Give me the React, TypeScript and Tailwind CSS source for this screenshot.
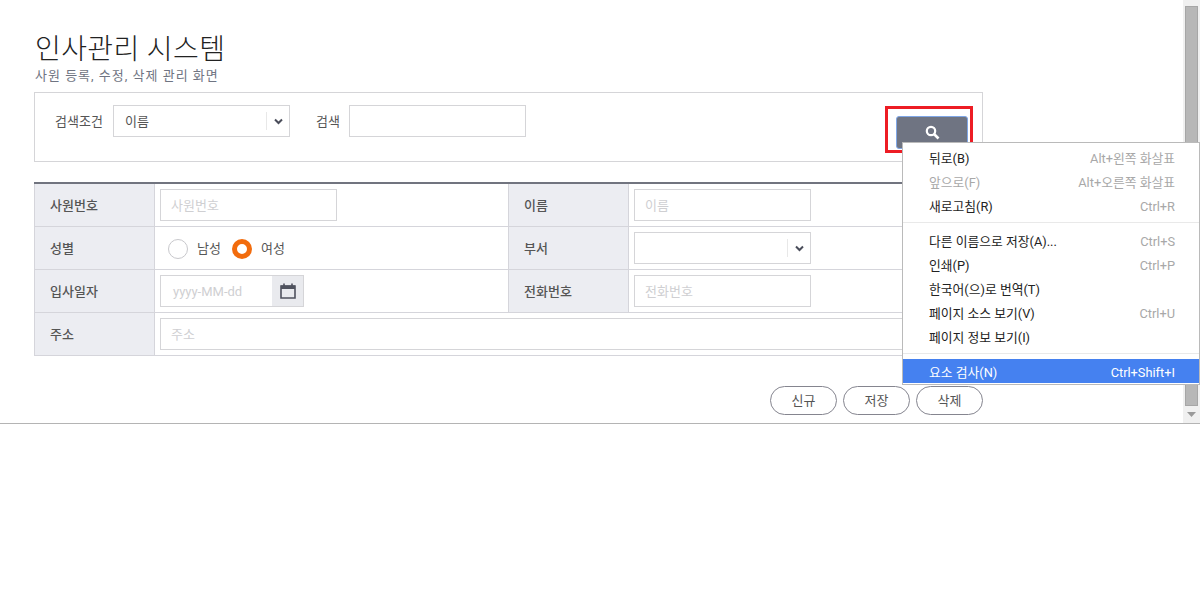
const font = { fontFamily: 'Roboto, "Noto Sans CJK KR", sans-serif' };

function Chevron() {
  return (
    <svg width="9" height="7" viewBox="0 0 9 7" className="text-[#4a4d5a]">
      <path d="M1 1.5l3.5 3.5L8 1.5" fill="none" stroke="currentColor" strokeWidth="2" />
    </svg>
  );
}

function Select({ value }: { value?: string }) {
  return (
    <div className="w-[177px] h-[32px] bg-white border border-[#d5d5d8] flex items-center pl-[11px] text-[13px] text-[#555]">
      <span className="flex-1 pt-[2px]">{value}</span>
      <div className="w-[23px] h-[18px] border-l border-[#e8e8e8] flex items-center justify-center">
        <Chevron />
      </div>
    </div>
  );
}

function Field({ placeholder }: { placeholder: string }) {
  return (
    <div className="w-[177px] h-[32px] border border-[#d5d5d8] flex items-center pl-[10px] pt-[2px] text-[13px] text-[#cfcfd2]">
      {placeholder}
    </div>
  );
}

function Th({ children, width }: { children: string; width: string }) {
  return (
    <div className={`${width} shrink-0 bg-[#ecedf2] border-x border-[#d5d5db] pl-[15px] pt-[2px] flex items-center text-[13px] font-medium text-[#555]`}>
      {children}
    </div>
  );
}

function Row({ children }: { children: React.ReactNode }) {
  return <div className="flex h-[43px] border-b border-[#d5d5db]">{children}</div>;
}

function Pill({ label }: { label: string }) {
  return (
    <button className="w-[67px] h-[29px] rounded-full border border-[#85858f] text-[13px] text-[#555] bg-white">
      {label}
    </button>
  );
}

type Item = { label: string; keys?: string; disabled?: boolean };

function MenuRow({ label, keys, disabled }: Item) {
  return (
    <div className="h-[24px] flex items-center justify-between pl-[26px] pr-[24px]">
      <span className={disabled ? "text-[#a8a8a8]" : "text-[#222]"}>{label}</span>
      <span className="text-[#a8a8a8]">{keys}</span>
    </div>
  );
}

const firstGroup: Item[] = [
  { label: "뒤로(B)", keys: "Alt+왼쪽 화살표" },
  { label: "앞으로(F)", keys: "Alt+오른쪽 화살표", disabled: true },
  { label: "새로고침(R)", keys: "Ctrl+R" },
];

const secondGroup: Item[] = [
  { label: "다른 이름으로 저장(A)...", keys: "Ctrl+S" },
  { label: "인쇄(P)", keys: "Ctrl+P" },
  { label: "한국어(으)로 번역(T)" },
  { label: "페이지 소스 보기(V)", keys: "Ctrl+U" },
  { label: "페이지 정보 보기(I)" },
];

export default function App() {
  return (
    <div className="relative w-[1200px] h-[605px] bg-white overflow-hidden" style={font}>
      <div className="flex h-[424px] border-b border-[#b4b4b4]">
        <main className="flex-1 pl-[34px] pt-[34px]">
          <div className="w-[949px]">
            <h1 className="text-[28px] leading-[32px] font-light text-[#222] tracking-[0.4px] pl-px">인사관리 시스템</h1>
            <p className="text-[13px] leading-[18px] text-[#6f7482] mt-px tracking-[1px] pl-px">사원 등록, 수정, 삭제 관리 화면</p>

            <div className="mt-[7px] h-[70px] border border-[#d5d5d8] flex items-start pt-[12px] pl-[20px] pr-[14px] text-[13px] text-[#555]">
              <span className="w-[58px] leading-[33px]">검색조건</span>
              <Select value="이름" />
              <span className="w-[59px] pl-[26px] leading-[33px]">검색</span>
              <div className="w-[177px] h-[32px] border border-[#d5d5d8]" />
              <button className="ml-auto mt-[11px] w-[72px] h-[33px] rounded-[3px] bg-[#6f7482] border border-[#7fa6e6] flex items-center justify-center">
                <svg width="15" height="15" viewBox="0 0 15 15">
                  <circle cx="6" cy="6" r="4.2" fill="none" stroke="white" strokeWidth="2.2" />
                  <path d="M9 9l4.5 4.5" stroke="white" strokeWidth="2.6" />
                </svg>
              </button>
            </div>

            <div className="mt-[20px] border-t-2 border-[#71747f]">
              <Row>
                <Th width="w-[121px]">사원번호</Th>
                <div className="w-[353px] pl-[5px] flex items-center"><Field placeholder="사원번호" /></div>
                <Th width="w-[121px]">이름</Th>
                <div className="flex-1 pl-[5px] flex items-center"><Field placeholder="이름" /></div>
              </Row>
              <Row>
                <Th width="w-[121px]">성별</Th>
                <div className="w-[353px] pl-[13px] pt-[2px] flex items-center text-[13px] text-[#555]">
                  <span className="w-[20px] h-[20px] rounded-full border border-[#c8c8cc]" />
                  <span className="ml-[9px] w-[24px]">남성</span>
                  <span className="ml-[11px] w-[20px] h-[20px] rounded-full border-[5px] border-[#f26c0d] bg-white" />
                  <span className="ml-[9px]">여성</span>
                </div>
                <Th width="w-[121px]">부서</Th>
                <div className="flex-1 pl-[5px] flex items-center"><Select /></div>
              </Row>
              <Row>
                <Th width="w-[121px]">입사일자</Th>
                <div className="w-[353px] pl-[5px] flex items-center">
                  <div className="w-[144px] h-[32px] border border-[#d5d5d8] flex items-center">
                    <span className="flex-1 pl-[12px] pt-[2px] text-[13px] text-[#cfcfd2]">yyyy-MM-dd</span>
                    <div className="w-[31px] h-full bg-[#e9eaee] flex items-center justify-center">
                      <svg width="16" height="16" viewBox="0 0 16 16" className="text-[#4f525e]">
                        <path d="M1 3h14v12H1z" fill="none" stroke="currentColor" strokeWidth="1.6" />
                        <path d="M1 2.5h14V6H1z" fill="currentColor" />
                        <path d="M4 0.5v3M12 0.5v3" stroke="currentColor" strokeWidth="1.6" />
                      </svg>
                    </div>
                  </div>
                </div>
                <Th width="w-[121px]">전화번호</Th>
                <div className="flex-1 pl-[5px] flex items-center"><Field placeholder="전화번호" /></div>
              </Row>
              <Row>
                <Th width="w-[121px]">주소</Th>
                <div className="flex-1 pl-[5px] pr-[5px] border-r border-[#d5d5db] flex items-center">
                  <div className="w-full h-[32px] border border-[#d5d5d8] flex items-center pl-[10px] pt-[2px] text-[13px] text-[#cfcfd2]">주소</div>
                </div>
              </Row>
            </div>

            <div className="mt-[30px] flex justify-end gap-[6px]">
              <Pill label="신규" />
              <Pill label="저장" />
              <Pill label="삭제" />
            </div>
          </div>
        </main>

        <div className="w-[17px] bg-[#f0f0f0] flex flex-col items-center pt-[6px]">
          <div className="w-[13px] h-[400px] bg-[#b7b7b7] border border-[#a6a6a6]" />
          <svg width="9" height="5" viewBox="0 0 9 5" className="mt-[6px]">
            <path d="M0 0h9L4.5 5z" fill="#9a9a9a" />
          </svg>
        </div>
      </div>

      {/* highlight drawn over the screenshot */}
      <div className="absolute left-[885px] top-[106px] w-[88px] h-[47px] border-[3px] border-[#ed1c24]" />

      {/* browser context menu */}
      <div className="absolute left-[902px] top-[142px] w-[298px] h-[243px] bg-white border border-[#bababa] text-[12.8px] pt-[4px]">
        {firstGroup.map((item) => <MenuRow key={item.label} {...item} />)}
        <div className="my-[3px] border-t border-[#e9e9e9]" />
        <div className="mt-[7px]">
          {secondGroup.map((item) => <MenuRow key={item.label} {...item} />)}
        </div>
        <div className="mt-[3px] border-t border-[#e9e9e9]" />
        <div className="mt-[5px] h-[24px] bg-[#4581f0] text-white flex items-center justify-between pl-[26px] pr-[24px]">
          <span className="translate-y-[2px]">요소 검사(N)</span>
          <span className="translate-y-[2px]">Ctrl+Shift+I</span>
        </div>
      </div>
    </div>
  );
}
